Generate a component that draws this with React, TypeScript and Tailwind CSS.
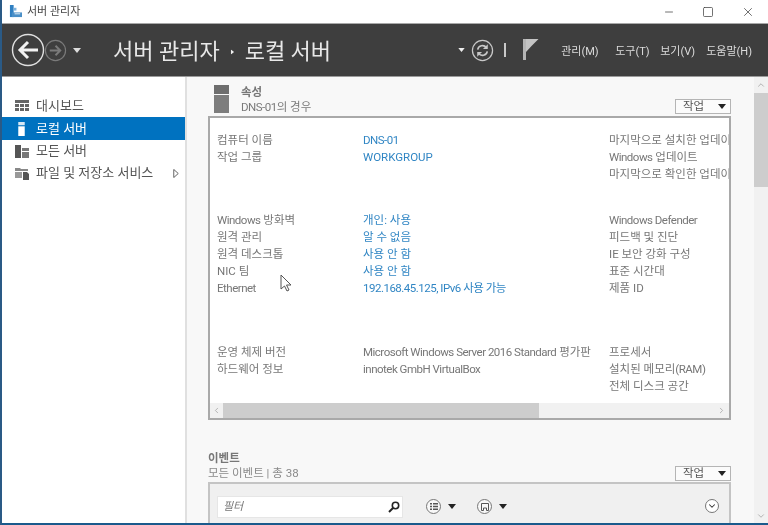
import { ChevronDown, ChevronLeft, ChevronRight, ChevronUp, Minus, Square, X } from 'lucide-react';

const font = { fontFamily: 'Roboto, "Noto Sans CJK KR", sans-serif' };

function Caret({ className }: { className: string }) {
  return (
    <svg viewBox="0 0 8 5" className={className}>
      <path d="M0 0h8L4 5z" fill="currentColor" />
    </svg>
  );
}

function TaskButton() {
  return (
    <div className="w-[56px] h-[15px] border border-[#b5b5b5] bg-[#fbfbfb] flex items-center justify-between pl-[7px] pr-[4px] text-[11.5px] leading-none text-[#555]">
      <span>작업</span>
      <Caret className="w-[8px] h-[5px] text-[#222]" />
    </div>
  );
}

// latin runs are narrower in the picture than in Roboto at this size
function L({ children }: { children: React.ReactNode }) {
  return <span className="tracking-[-0.5px]">{children}</span>;
}

function Row({ label, value, link, side }: { label?: React.ReactNode; value?: React.ReactNode; link?: boolean; side?: React.ReactNode }) {
  return (
    <div className="flex h-[17px] items-center text-[11.5px] whitespace-nowrap">
      <div className="w-[146px] shrink-0 text-[#777]">{label}</div>
      <div className={`w-[246px] shrink-0 ${link ? 'text-[#3186c4]' : 'text-[#777]'}`}>{value}</div>
      <div className="text-[#777]">{side}</div>
    </div>
  );
}

function RoundIcon({ children }: { children: React.ReactNode }) {
  return (
    <div className="w-[15px] h-[15px] rounded-full border border-[#777] bg-[#f8f8f8] flex items-center justify-center">
      {children}
    </div>
  );
}

export default function App() {
  return (
    <div className="w-[768px] h-[525px] overflow-hidden relative flex flex-col bg-[#f8f8f8] border-l-2 border-[#2a5a86] blur-[0.4px]" style={font}>
      {/* Title bar */}
      <div className="h-[24px] shrink-0 bg-white flex items-center justify-between pl-[7px] border-b border-[#a8a8a8]">
        <div className="flex items-center gap-[5px]">
          <svg viewBox="0 0 14 14" className="w-[13px] h-[13px]">
            <rect x="1" y="0" width="4" height="13" fill="#2f7fc1" />
            <rect x="5" y="3" width="3" height="3" fill="#7fb2dc" />
            <path d="M3 8h11v5H3z" fill="#4a8fc7" />
            <rect x="6" y="9" width="6" height="1" fill="#e8f1f8" />
          </svg>
          <span className="text-[11px] text-[#444] pt-[1px]">서버 관리자</span>
        </div>
        <div className="flex items-center gap-[27px] pr-[13px] text-[#444]">
          <Minus size={12} strokeWidth={1.5} />
          <Square size={12} strokeWidth={1.5} />
          <X size={14} strokeWidth={1.3} />
        </div>
      </div>

      {/* Dark header */}
      <div className="h-[53px] shrink-0 bg-[#3e3e3e] border-b border-[#9a9a9a] flex items-center text-[#e8e8e8]">
        <div className="flex items-center pl-[9px] w-[111px] shrink-0">
          <svg viewBox="0 0 34 34" className="w-[34px] h-[34px]">
            <circle cx="17" cy="17" r="15.5" fill="none" stroke="#e0e0e0" strokeWidth="1.4" />
            <path d="M27 17H10M17 9l-8 8 8 8" fill="none" stroke="#f2f2f2" strokeWidth="3" />
          </svg>
          <svg viewBox="0 0 24 24" className="w-[23px] h-[23px] -ml-[1px]">
            <circle cx="12" cy="12" r="10.5" fill="none" stroke="#7a7a7a" strokeWidth="1.2" />
            <path d="M6 12h11M12 7l5 5-5 5" fill="none" stroke="#7a7a7a" strokeWidth="2" />
          </svg>
          <Caret className="w-[8px] h-[5px] ml-[6px] text-[#ddd]" />
        </div>
        <div className="flex items-center text-[22px] leading-none whitespace-nowrap pt-[3px]">
          <span>서버 관리자</span>
          <Caret className="w-[5px] h-[4px] mx-[10px] -rotate-90 text-[#eee]" />
          <span>로컬 서버</span>
        </div>
        <div className="ml-auto flex items-center">
          <Caret className="w-[7px] h-[4px] mr-[6px] text-[#eee]" />
          <svg viewBox="0 0 24 24" className="w-[23px] h-[23px]">
            <circle cx="12" cy="12" r="10.5" fill="none" stroke="#c8c8c8" strokeWidth="1.3" />
            <path d="M7 11a5 5 0 0 1 9-2M17 13a5 5 0 0 1-9 2" fill="none" stroke="#c8c8c8" strokeWidth="1.7" />
            <path d="M17.5 5.500v5h-5zM6.500 18.500v-5h5z" fill="#c8c8c8" />
          </svg>
          <div className="w-[2px] h-[14px] bg-[#c8c8c8] ml-[10px] mr-[17px]" />
          <svg viewBox="0 0 16 22" className="w-[16px] h-[22px] mr-[22px]">
            <rect x="0" y="0" width="3" height="21" fill="#b5b5b5" />
            <path d="M3 0h12.500L9 6.500 3 13z" fill="#c4c4c4" />
          </svg>
          <div className="flex text-[11px] text-[#dcdcdc] pr-[16px] pt-[4px] whitespace-nowrap">
            <span className="w-[54px]">관리(M)</span>
            <span className="w-[45px]">도구(T)</span>
            <span className="w-[46px]">보기(V)</span>
            <span>도움말(H)</span>
          </div>
        </div>
      </div>

      <div className="flex-1 min-h-0 flex">
        {/* Sidebar */}
        <div className="w-[185px] shrink-0 bg-white border-r-2 border-[#e0e0e0] pt-[18px] text-[13px] text-[#555]">
          <div className="h-[22px] flex items-center pl-[13px] gap-[7px]">
            <svg viewBox="0 0 14 12" className="w-[14px] h-[12px]">
              <path d="M0 0h14v3H0zM0 4h4v3H0zM5 4h4v3H5zM10 4h4v3h-4zM0 8h4v3H0zM5 8h4v3H5zM10 8h4v3h-4z" fill="#666" />
            </svg>
            <span>대시보드</span>
          </div>
          <div className="h-[23px] flex items-center pl-[16px] gap-[11px] bg-[#0072c0] text-white">
            <svg viewBox="0 0 6 13" className="w-[7px] h-[14px]">
              <rect width="6" height="3" fill="#d8e8f4" />
              <rect y="4" width="6" height="9" fill="#fff" />
            </svg>
            <span>로컬 서버</span>
          </div>
          <div className="h-[22px] flex items-center pl-[13px] gap-[7px]">
            <svg viewBox="0 0 14 13" className="w-[14px] h-[13px]">
              <rect width="6" height="13" fill="#555" />
              <rect x="7" y="3" width="7" height="3" fill="#777" />
              <rect x="7" y="7" width="7" height="6" fill="#777" />
            </svg>
            <span>모든 서버</span>
          </div>
          <div className="h-[22px] flex items-center pl-[13px] gap-[7px]">
            <svg viewBox="0 0 14 13" className="w-[14px] h-[13px]">
              <path d="M0 1h5l1 1h7v2H0z" fill="#888" />
              <path d="M0 5h7v6H0z" fill="#999" />
              <path d="M8 5h4l2 2v6H8z" fill="#555" />
            </svg>
            <span>파일 및 저장소 서비스</span>
            <svg viewBox="0 0 6 10" className="w-[6px] h-[9px] ml-[13px]">
              <path d="M.5.500l5 4.500-5 4.500z" fill="#fff" stroke="#555" />
            </svg>
          </div>
        </div>

        {/* Content */}
        <div className="flex-1 min-w-0 flex">
          <div className="flex-1 min-w-0 pl-[21px] pr-[23px] overflow-hidden">
            <div className="flex h-[39px]">
              <svg viewBox="0 0 15 28" className="w-[15px] h-[28px] ml-[6px] mt-[8px] shrink-0">
                <rect width="15" height="9" fill="#6e6e6e" />
                <rect y="10" width="15" height="18" fill="#7d7d7d" />
              </svg>
              <div className="ml-[12px] mt-[8px]">
                <div className="text-[11.5px] font-bold leading-[15px] text-[#777]">속성</div>
                <div className="text-[11.5px] leading-[15px] text-[#7a7a7a]"><L>DNS-01</L>의 경우</div>
              </div>
              <div className="ml-auto mt-[22px]">
                <TaskButton />
              </div>
            </div>

            <div className="h-[304px] border-2 border-[#a9a9a9] bg-white flex flex-col">
              <div className="flex-1 min-h-0 overflow-hidden pl-[7px] pt-[14px]">
                <Row label="컴퓨터 이름" value={<L>DNS-01</L>} link side="마지막으로 설치한 업데이트" />
                <Row label="작업 그룹" value="WORKGROUP" link side={<><L>Windows</L> 업데이트</>} />
                <Row side="마지막으로 확인한 업데이트" />
                <div className="h-[29px]" />
                <Row label={<><L>Windows</L> 방화벽</>} value="개인: 사용" link side={<L>Windows Defender</L>} />
                <Row label="원격 관리" value="알 수 없음" link side="피드백 및 진단" />
                <Row label="원격 데스크톱" value="사용 안 함" link side="IE 보안 강화 구성" />
                <Row label="NIC 팀" value="사용 안 함" link side="표준 시간대" />
                <Row label={<L>Ethernet</L>} value={<L>192.168.45.125, IPv6 사용 가능</L>} link side="제품 ID" />
                <div className="h-[47px]" />
                <Row label="운영 체제 버전" value={<><L>Microsoft Windows Server 2016 Standard</L> 평가판</>} side="프로세서" />
                <Row label="하드웨어 정보" value={<L>innotek GmbH VirtualBox</L>} side={<>설치된 메모리<L>(RAM)</L></>} />
                <Row side="전체 디스크 공간" />
              </div>
              <div className="h-[15px] shrink-0 bg-[#f1f1f1] flex items-center">
                <div className="w-[13px] flex justify-center text-[#a0a0a0]">
                  <ChevronLeft size={9} strokeWidth={2} />
                </div>
                <div className="w-[316px] h-full bg-[#cdcdcd]" />
                <div className="ml-auto w-[15px] flex justify-center text-[#a0a0a0]">
                  <ChevronRight size={9} strokeWidth={2} />
                </div>
              </div>
            </div>

            <div className="flex mt-[31px] h-[31px]">
              <div>
                <div className="text-[11.5px] font-bold leading-[15px] text-[#777]">이벤트</div>
                <div className="text-[11.5px] leading-[15px] text-[#8a8a8a]">모든 이벤트 | 총 38</div>
              </div>
              <div className="ml-auto mt-[15px]">
                <TaskButton />
              </div>
            </div>
            <div className="h-[60px] border-2 border-b-0 border-[#c4c4c4] bg-[#f0f0f0] flex pl-[7px] pt-[12px] pr-[10px]">
              <div className="w-[186px] h-[22px] bg-white border border-[#e6e6e6] flex items-center justify-between pl-[5px] pr-[2px]">
                <span className="text-[11px] italic text-[#777]">필터</span>
                <svg viewBox="0 0 12 12" className="w-[12px] h-[12px]">
                  <circle cx="7.500" cy="4.500" r="3.200" fill="none" stroke="#222" strokeWidth="1.600" />
                  <path d="M5 7l-4 4" stroke="#222" strokeWidth="2" />
                </svg>
              </div>
              <div className="flex items-start ml-[23px] mt-[3px]">
                <RoundIcon>
                  <svg viewBox="0 0 8 7" className="w-[8px] h-[7px]">
                    <path d="M0 0h2v1.500H0zM3 0h5v1.500H3zM0 2.700h2v1.500H0zM3 2.700h5v1.500H3zM0 5.400h2V7H0zM3 5.400h5V7H3z" fill="#555" />
                  </svg>
                </RoundIcon>
                <Caret className="w-[8px] h-[5px] ml-[7px] mt-[5px] text-[#222]" />
                <div className="ml-[21px]">
                  <RoundIcon>
                    <svg viewBox="0 0 8 8" className="w-[8px] h-[8px]">
                      <path d="M.5.500h7v7H5.500V5h-3v2.500H.5z" fill="none" stroke="#555" strokeWidth="1" />
                    </svg>
                  </RoundIcon>
                </div>
                <Caret className="w-[8px] h-[5px] ml-[7px] mt-[5px] text-[#222]" />
              </div>
              <div className="ml-auto mt-[3px]">
                <div className="w-[14px] h-[14px] rounded-full border border-[#777] bg-white flex items-center justify-center text-[#333]">
                  <ChevronDown size={10} strokeWidth={2.5} />
                </div>
              </div>
            </div>
          </div>

          {/* Page scrollbar */}
          <div className="w-[14px] shrink-0 bg-[#f1f1f1] flex flex-col text-[#a6a6a6]">
            <div className="h-[16px] flex items-center justify-center">
              <ChevronUp size={10} strokeWidth={2} />
            </div>
            <div className="h-[94px] bg-[#cdcdcd]" />
            <div className="mt-auto h-[14px] flex items-center justify-center">
              <ChevronDown size={10} strokeWidth={2} />
            </div>
          </div>
        </div>
      </div>

      <div className="h-[2px] shrink-0 bg-[#1a5a8c]" />

      {/* Mouse pointer */}
      <svg viewBox="0 0 12 18" className="absolute left-[278px] top-[274px] w-[12px] h-[18px]">
        <path d="M1 1v14l3.500-3 2.500 5 2-1-2.500-5H11z" fill="#fff" stroke="#555" strokeWidth="1" />
      </svg>
    </div>
  );
}
